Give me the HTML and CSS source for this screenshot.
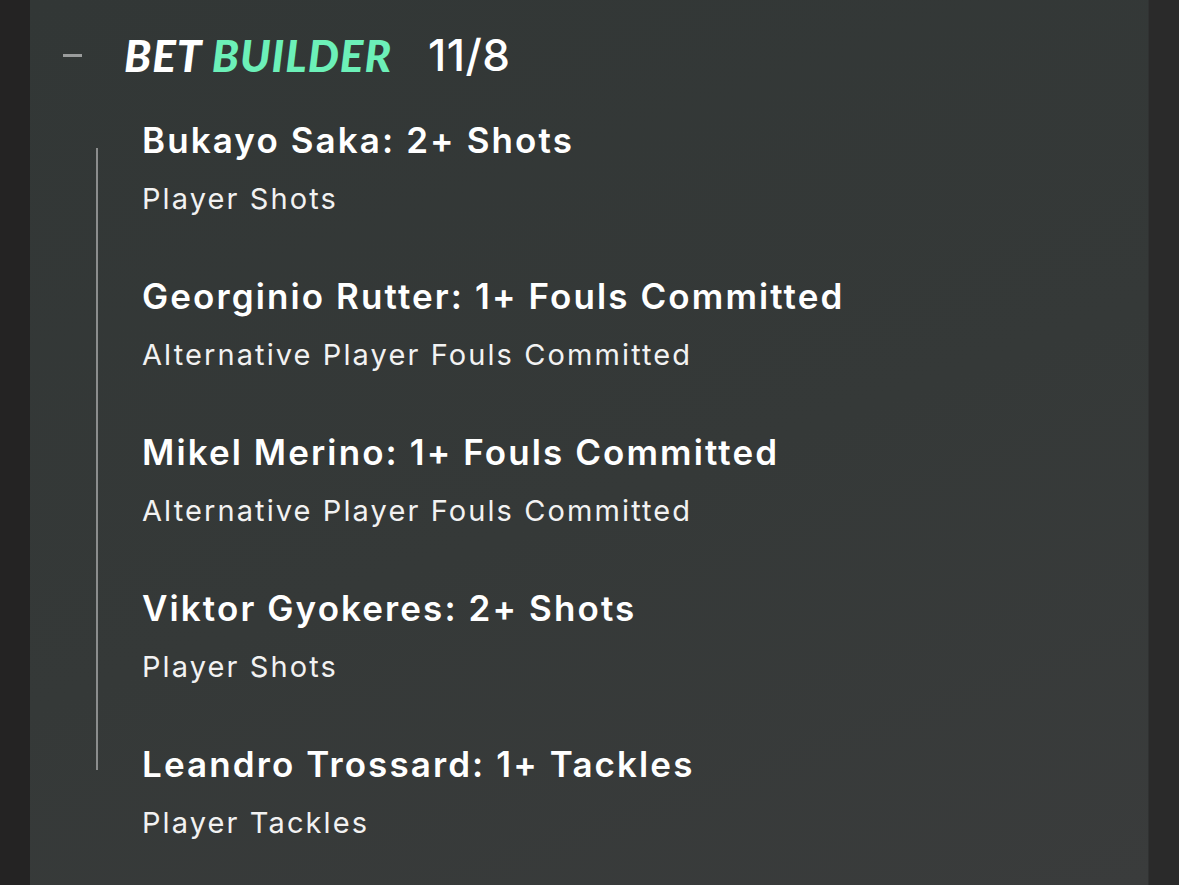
FILE: index.html
```html
<!DOCTYPE html>
<html>
<head>
<meta charset="utf-8">
<link rel="stylesheet" href="styles.css">
</head>
<body>
<div class="page">
  <div class="side side-left"></div>
  <main class="card">
    <header class="bb-header">
      <span class="collapse"></span>
      <h1 class="bb-title"><span class="bet">BET</span> <span class="builder">BUILDER</span></h1>
      <span class="odds">11/8</span>
    </header>
    <div class="legs">
      <div class="rail"></div>
      <ul class="leg-list">
        <li class="leg"><div class="leg-name">Bukayo Saka: 2+ Shots</div><div class="leg-market">Player Shots</div></li>
        <li class="leg"><div class="leg-name">Georginio Rutter: 1+ Fouls Committed</div><div class="leg-market">Alternative Player Fouls Committed</div></li>
        <li class="leg"><div class="leg-name">Mikel Merino: 1+ Fouls Committed</div><div class="leg-market">Alternative Player Fouls Committed</div></li>
        <li class="leg"><div class="leg-name">Viktor Gyokeres: 2+ Shots</div><div class="leg-market">Player Shots</div></li>
        <li class="leg"><div class="leg-name">Leandro Trossard: 1+ Tackles</div><div class="leg-market">Player Tackles</div></li>
      </ul>
    </div>
  </main>
  <div class="side side-right"></div>
</div>
</body>
</html>
```
FILE: styles.css
```css
* { box-sizing: border-box; }
html, body { margin: 0; padding: 0; height: 100%; }
body { background: #262626; font-family: Inter, "Noto Sans", sans-serif; color: #fff; overflow: hidden; }
.page { display: flex; height: 885px; }
.side-left { width: 30px; background: #242323; }
.side-right { width: 31px; background: #2a2a2a; border-left: 1px solid #303232; }
.card {
  flex: 1;
  background: linear-gradient(160deg, #323736 0%, #353938 55%, #3a3c3c 100%);
}
.bb-header { display: flex; align-items: center; height: 110px; padding-left: 33px; }
.collapse { width: 19px; height: 3px; background: #9a9c9c; margin-right: 42px; }
.bb-title {
  margin: 0;
  font-family: Lato, sans-serif;
  font-weight: 900;
  font-style: italic;
  font-size: 44px;
  letter-spacing: 1px;
  color: #fff;
  line-height: 1;
}
.builder { color: #6cf0b8; }
.odds { margin-left: 36px; font-size: 44px; font-weight: 500; color: #fff; line-height: 1; letter-spacing: 0.5px; }
.legs { display: flex; padding-left: 66px; }
.rail { width: 2px; background: #8b8d8d; margin-top: 38px; height: 622px; flex: none; }
.leg-list { list-style: none; margin: 0; padding: 0 0 0 44px; }
.leg { height: 156px; padding-top: 10px; }
.leg-name { font-size: 35px; font-weight: 600; line-height: 40px; letter-spacing: 2.1px; white-space: nowrap; }
.leg-market { font-size: 29px; font-weight: 400; line-height: 34px; margin-top: 22px; letter-spacing: 2.1px; color: #f2f2f2; white-space: nowrap; }
```
